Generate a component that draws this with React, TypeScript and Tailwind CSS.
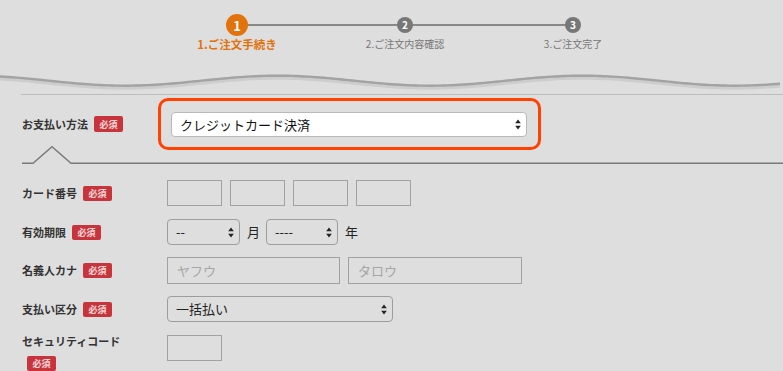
import React from "react";

const FONT = { fontFamily: '"Noto Sans CJK JP", "Noto Sans", sans-serif' };

function wavePath() {
  // sinusoid: troughs near x=125, 425, 735, peaks near 280, 585
  const pts: string[] = [];
  for (let x = 0; x <= 783; x += 4) {
    const y = 15.7 + 5 * Math.cos((2 * Math.PI * (x - 125)) / 305);
    pts.push(`${x === 0 ? "M" : "L"}${x},${y.toFixed(2)}`);
  }
  return pts.join(" ");
}

function Badge({ className = "" }: { className?: string }) {
  return (
    <span
      className={`inline-flex h-[15px] w-[29px] items-center justify-center rounded-[2px] bg-[#c8343b] text-[9px] font-bold leading-none text-white/80 ${className}`}
    >
      必須
    </span>
  );
}

function Arrows() {
  return (
    <svg width="6" height="11" viewBox="0 0 6 11" className="shrink-0">
      <path d="M3 0.5 L5.8 4.3 L0.2 4.3 Z" fill="#222" />
      <path d="M3 10.5 L5.8 6.7 L0.2 6.7 Z" fill="#222" />
    </svg>
  );
}

function FakeSelect({
  value,
  className,
}: {
  value: string;
  className: string;
}) {
  return (
    <div
      className={`flex h-full items-center justify-between rounded-[4px] border border-[#9d9d9d] pl-[8px] pr-[5px] text-[13px] text-[#222] ${className}`}
    >
      <span>{value}</span>
      <Arrows />
    </div>
  );
}

function Box({ className, placeholder }: { className: string; placeholder?: string }) {
  return (
    <div
      className={`flex h-full items-center border border-[#a2a2a2] pl-[9px] text-[13px] text-[#a6a6a6] ${className}`}
    >
      {placeholder}
    </div>
  );
}

function Label({ text }: { text: string }) {
  return (
    <div className="flex w-[167px] shrink-0 items-center gap-[6px] pl-[22px]">
      <span className="text-[11px] font-bold text-[#333]">{text}</span>
      <Badge />
    </div>
  );
}

const steps = [
  { n: "1", label: "1.ご注文手続き", active: true },
  { n: "2", label: "2.ご注文内容確認", active: false },
  { n: "3", label: "3.ご注文完了", active: false },
];

export default function App() {
  return (
    <div
      className="h-[371px] w-[783px] overflow-hidden bg-[#dedede]"
      style={FONT}
    >
      {/* stepper */}
      <div className="ml-[153px] w-[504px] pt-[14px]">
        <div className="relative grid h-[22px] grid-cols-3">
          <div className="absolute left-[84px] top-[10px] h-[2px] w-[337px] bg-[#888]" />
          {steps.map((s) => (
            <div key={s.n} className="relative flex items-center justify-center">
              {s.active ? (
                <span className="flex h-[22px] w-[22px] items-center justify-center rounded-full bg-[#e2730c] text-[13px] font-bold leading-none text-white">
                  {s.n}
                </span>
              ) : (
                <span className="flex h-[16px] w-[16px] items-center justify-center rounded-full bg-[#777] text-[10px] font-bold leading-none text-white">
                  {s.n}
                </span>
              )}
            </div>
          ))}
        </div>
        <div className="mt-[1px] grid grid-cols-3 text-center leading-[14px]">
          {steps.map((s) => (
            <span
              key={s.n}
              className={
                s.active
                  ? "text-[11.5px] font-bold text-[#e2730c]"
                  : "text-[10px] text-[#777]"
              }
            >
              {s.label}
            </span>
          ))}
        </div>
      </div>

      {/* wave */}
      <svg width="783" height="29" viewBox="0 0 783 29" className="mt-[14px] block">
        <path d={wavePath()} fill="none" stroke="#cdcdcd" strokeWidth="5" transform="translate(0 1.5)" />
        <path d={wavePath()} fill="none" stroke="#a3a3a3" strokeWidth="2.4" />
      </svg>
      <div className="ml-[21px] border-t border-[#bdbdbd]" />

      {/* payment method */}
      <div className="mt-[3px] flex items-center pl-[22px]">
        <div className="flex w-[136px] shrink-0 items-center gap-[6px]">
          <span className="text-[11px] font-bold text-[#333]">お支払い方法</span>
          <Badge className="h-[16px] w-[28px]" />
        </div>
        <div className="h-[52px] w-[383px] rounded-[10px] border-[3px] border-[#ff4200] pl-[10px] pt-[11px]">
          <div className="flex h-[25px] w-[356px] items-center justify-between rounded-[4px] border border-[#b9b9b9] bg-white pl-[8px] pr-[5px] text-[13px] text-[#111]">
            <span>クレジットカード決済</span>
            <Arrows />
          </div>
        </div>
      </div>

      {/* notch line */}
      <svg width="783" height="20" viewBox="0 0 783 20" className="-mt-[5px] block">
        <path d="M22 18.3 L33 18.3 L52 1.7 L71 18.3 L783 18.3" fill="none" stroke="#7a7a7a" strokeWidth="1.5" />
      </svg>

      {/* card number */}
      <div className="mt-[15px] flex h-[26px]">
        <Label text="カード番号" />
        <div className="flex gap-[8px]">
          <Box className="w-[55px]" />
          <Box className="w-[55px]" />
          <Box className="w-[55px]" />
          <Box className="w-[55px]" />
        </div>
      </div>

      {/* expiry */}
      <div className="mt-[13px] flex h-[26px]">
        <Label text="有効期限" />
        <div className="flex items-center">
          <FakeSelect value="--" className="w-[73px]" />
          <span className="ml-[7px] text-[13px] text-[#222]">月</span>
          <FakeSelect value="----" className="ml-[6px] w-[72px]" />
          <span className="ml-[7px] text-[13px] text-[#222]">年</span>
        </div>
      </div>

      {/* kana */}
      <div className="mt-[12px] flex h-[27px]">
        <Label text="名義人カナ" />
        <div className="flex gap-[8px]">
          <Box className="w-[173px]" placeholder="ヤフウ" />
          <Box className="w-[174px]" placeholder="タロウ" />
        </div>
      </div>

      {/* installments */}
      <div className="mt-[12px] flex h-[26px]">
        <Label text="支払い区分" />
        <FakeSelect value="一括払い" className="w-[226px]" />
      </div>

      {/* security code */}
      <div className="mt-[13px] flex">
        <div className="w-[167px] shrink-0 pl-[22px]">
          <div className="text-[11px] font-bold leading-[13px] text-[#333]">
            セキュリティコード
          </div>
          <Badge className="ml-[5px] mt-[7px]" />
        </div>
        <div className="h-[26px]">
          <Box className="w-[55px]" />
        </div>
      </div>
      <div className="ml-[167px] mt-[4px] text-[11px] text-[#777]">
        ※カード裏面の署名欄に記載されている末尾3桁の数字をご入力ください。
      </div>
    </div>
  );
}
